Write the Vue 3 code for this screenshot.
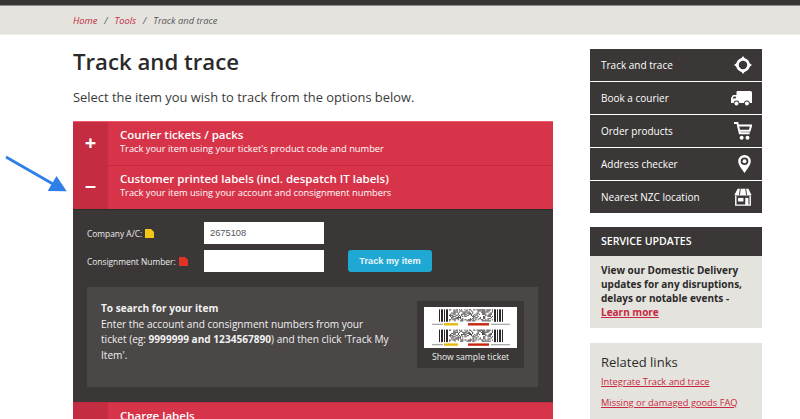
<template>
  <div class="page">
    <div class="topstrip"></div>
    <div class="breadcrumb">
      <a>Home</a><span class="sep">/</span><a>Tools</a><span class="sep">/</span><span>Track and trace</span>
    </div>

    <div class="content">
      <main class="main">
        <h1>Track and trace</h1>
        <p class="lead">Select the item you wish to track from the options below.</p>

        <section class="accordion">
          <div class="acc-head first">
            <div class="acc-sign">+</div>
            <div class="acc-text">
              <h3>Courier tickets / packs</h3>
              <p>Track your item using your ticket's product code and number</p>
            </div>
          </div>
          <div class="acc-head">
            <div class="acc-sign">−</div>
            <div class="acc-text">
              <h3>Customer printed labels (incl. despatch IT labels)</h3>
              <p>Track your item using your account and consignment numbers</p>
            </div>
          </div>

          <div class="panel">
            <form class="track-form" @submit.prevent>
              <label class="lbl">Company A/C:
                <svg class="doc" viewBox="0 0 9 9"><path d="M0 0h6l3 3v6H0z" fill="#f5c518" /></svg>
              </label>
              <input v-model="account" />
              <span></span>
              <label class="lbl">Consignment Number:
                <svg class="doc" viewBox="0 0 9 9"><path d="M0 0h6l3 3v6H0z" fill="#e03325" /></svg>
              </label>
              <input v-model="consignment" />
              <button type="submit">Track my item</button>
            </form>

            <div class="help">
              <div class="help-text">
                <strong>To search for your item</strong><br />
                Enter the account and consignment numbers from your<br />
                ticket (eg: <strong>9999999 and 1234567890</strong>) and then click 'Track My<br />
                Item'.
              </div>
              <div class="sample">
                <svg class="ticket" viewBox="0 0 93 41">
                  <rect width="93" height="41" fill="#fff" />
                  <g v-for="row in [2.3, 22.6]" :key="row">
                    <rect v-for="b in bars" :key="b.x + '-' + row" :x="b.x" :y="row" :width="b.w" height="12.5" fill="#2a2626" />
                    <rect v-for="c in cells" :key="c.x + '-' + c.y + '-' + row" :x="c.x" :y="row + c.y" width="1.1" height="1.1" fill="#4a4646" />
                    <rect x="8" :y="row + 14.4" width="11" height="1.3" fill="#aaa" />
                    <rect x="20" :y="row + 13.8" width="14" height="2.4" fill="#e6b90f" />
                    <rect x="44" :y="row + 13.8" width="21" height="2.4" fill="#c9260f" />
                    <rect x="67" :y="row + 14.4" width="19" height="1.3" fill="#aaa" />
                  </g>
                </svg>
                <div class="sample-cap">Show sample ticket</div>
              </div>
            </div>
          </div>

          <div class="acc-head">
            <div class="acc-sign">+</div>
            <div class="acc-text">
              <h3>Charge labels</h3>
            </div>
          </div>
        </section>
      </main>

      <aside class="side">
        <nav class="tools">
          <a class="tool">
            <span>Track and trace</span>
            <svg viewBox="0 0 20 20" class="ico">
              <circle cx="10" cy="10" r="6.2" fill="none" stroke="#fff" stroke-width="3" />
              <path d="M10 0l2.6 3.6H7.4zM10 20l-2.6-3.6h5.2zM0 10l3.6-2.6v5.2zM20 10l-3.6 2.6V7.4z" fill="#fff" />
            </svg>
          </a>
          <a class="tool">
            <span>Book a courier</span>
            <svg viewBox="0 0 21 15" class="ico truck">
              <path d="M6.5 0H19.5A1.5 1.5 0 0 1 21 1.5V12H0V7l2-3h3.5V1A1 1 0 0 1 6.5 0z" fill="#fff" />
              <path d="M1.6 7.6l1.2-2H4.8v2z" fill="#3a3736" />
              <circle cx="5.5" cy="12.2" r="2.8" fill="#3a3736" />
              <circle cx="15.9" cy="12.2" r="2.8" fill="#3a3736" />
              <circle cx="5.5" cy="12.4" r="2" fill="#fff" />
              <circle cx="15.9" cy="12.4" r="2" fill="#fff" />
            </svg>
          </a>
          <a class="tool">
            <span>Order products</span>
            <svg viewBox="0 0 20 20" class="ico">
              <path d="M0 1.2h3.8l2.6 11.4h11" fill="none" stroke="#fff" stroke-width="2.2" />
              <path d="M4.6 4H19l-1.6 5.8H6" fill="none" stroke="#fff" stroke-width="2.2" />
              <circle cx="8.5" cy="17.4" r="2.2" fill="#fff" />
              <circle cx="15" cy="17.4" r="2.2" fill="#fff" />
            </svg>
          </a>
          <a class="tool">
            <span>Address checker</span>
            <svg viewBox="0 0 14 20" class="ico pin">
              <path d="M7 0a7 7 0 0 1 7 7c0 4-4 9-7 13-3-4-7-9-7-13a7 7 0 0 1 7-7z" fill="#fff" />
              <circle cx="7" cy="7" r="4.2" fill="#3a3736" />
              <circle cx="7" cy="7" r="2.2" fill="#fff" />
            </svg>
          </a>
          <a class="tool">
            <span>Nearest NZC location</span>
            <svg viewBox="0 0 20 20" class="ico">
              <path d="M4 .8h12l3.2 6.4v1.2H.8V7.2z" fill="#fff" />
              <path d="M7 1L6 8M13 1l1 7" stroke="#3a3736" stroke-width="1" />
              <path d="M2 9v10h16V9" fill="none" stroke="#fff" stroke-width="1.6" />
              <rect x="4.5" y="11" width="6" height="4" fill="#fff" />
              <rect x="12.5" y="11" width="3.5" height="8" fill="#fff" />
            </svg>
          </a>
        </nav>

        <div class="updates">
          <h4>SERVICE UPDATES</h4>
          <p>View our Domestic Delivery updates for any disruptions, delays or notable events - <a>Learn more</a></p>
        </div>

        <div class="related">
          <h4>Related links</h4>
          <a>Integrate Track and trace</a>
          <a>Missing or damaged goods FAQ</a>
        </div>
      </aside>
    </div>

    <svg class="arrow" viewBox="0 0 70 45">
      <path d="M6 3L53 30" stroke="#2f7fe8" stroke-width="2.8" fill="none" />
      <path d="M66.7 37.3L47.7 37L56.5 22z" fill="#2f7fe8" />
    </svg>
  </div>
</template>

<script setup>
import { ref } from 'vue'

const account = ref('2675108')
const consignment = ref('')

const bars = [
  { x: 15, w: 1 }, { x: 17, w: 2 }, { x: 20, w: 1 }, { x: 22, w: 2 },
  { x: 70, w: 2 }, { x: 73, w: 1 }, { x: 75, w: 2 }, { x: 78, w: 1 }
]

// pseudo random 2d code block for the sample ticket
const cells = []
let seed = 17
for (let y = 0; y < 12; y += 1.1) {
  for (let x = 25; x < 69; x += 1.1) {
    seed = (seed * 1103515245 + 12345) % 2147483648
    if (seed / 2147483648 > 0.5) cells.push({ x, y })
  }
}
</script>

<style scoped>
.page {
  position: relative;
  width: 800px;
  height: 419px;
  overflow: hidden;
  background: #fff;
  font-family: "Open Sans", "Noto Sans", sans-serif;
  color: #2b2a29;
}
.topstrip {
  height: 5px;
  background: #383634;
  border-bottom: 1px solid #8d8b87;
}
.breadcrumb {
  height: 28px;
  background: #e4e3de;
  padding-left: 73px;
  display: flex;
  align-items: center;
  font-size: 9.3px;
  font-style: italic;
  color: #555;
  border-bottom: 1px solid #efeeea;
}
.breadcrumb a {
  color: #c8283f;
}
.sep {
  margin: 0 7px;
  color: #555;
}
.content {
  display: flex;
  padding: 14px 38px 0 73px;
  gap: 37px;
}
.main {
  width: 480px;
  flex: none;
}
h1 {
  margin: 0;
  font-size: 22.2px;
  line-height: 26px;
  font-weight: 600;
  color: #2a2a2a;
}
.lead {
  margin: 11px 0 0;
  font-size: 12.9px;
  line-height: 22px;
  color: #3a3a3a;
}
.accordion {
  margin-top: 13px;
}
.acc-head {
  display: flex;
  height: 44px;
  background: #d7344a;
  color: #fff;
  border-top: 1px solid #c22a40;
  box-sizing: border-box;
}
.acc-head.first {
  border-top: 1px solid #ef5a6c;
}
.acc-sign {
  width: 35px;
  flex: none;
  background: #c42c41;
  display: flex;
  align-items: center;
  justify-content: center;
  padding-bottom: 3px;
  box-sizing: border-box;
  font-size: 20px;
  font-weight: 700;
}
.acc-text {
  padding: 5px 0 0 12px;
}
.acc-text h3 {
  margin: 0;
  font-size: 11.5px;
  line-height: 16px;
  font-weight: 600;
}
.acc-text p {
  margin: 0;
  font-size: 9.3px;
  line-height: 12px;
}
.panel {
  height: 193px;
  box-sizing: border-box;
  background: #3a3736;
  padding: 12px 15px 0 14px;
  border-top: 1px solid #2c2a29;
}
.track-form {
  display: grid;
  grid-template-columns: 117px 120px 1fr;
  row-gap: 6px;
  align-items: center;
}
.lbl {
  font-size: 8.4px;
  color: #eee;
  display: flex;
  align-items: center;
  gap: 3px;
}
.doc {
  width: 9px;
  height: 9px;
}
input {
  width: 120px;
  height: 22px;
  box-sizing: border-box;
  border: 0;
  background: #fff;
  padding: 0 6px;
  outline: none;
  font-family: "Liberation Sans", sans-serif;
  font-size: 9.3px;
  color: #555;
  border-radius: 0;
}
button {
  width: 84px;
  height: 22px;
  margin-left: 24px;
  border: 0;
  border-radius: 3px;
  background: #1fa8d4;
  color: #e8f4f8;
  font-family: "Liberation Sans", sans-serif;
  font-size: 9.2px;
  font-weight: 700;
  padding: 0;
}
.help {
  margin-top: 15px;
  height: 100px;
  background: #4a4746;
  display: flex;
  justify-content: space-between;
  padding: 14px 14px 0;
  box-sizing: border-box;
  color: #f1f1f1;
}
.help-text {
  width: 292px;
  font-size: 10.1px;
  line-height: 15.7px;
  white-space: nowrap;
}
.sample {
  width: 107px;
  height: 67px;
  background: #3a3736;
  padding: 6px 7px 0;
  box-sizing: border-box;
}
.ticket {
  width: 93px;
  height: 41px;
  display: block;
}
.sample-cap {
  margin-top: 2px;
  font-size: 8.6px;
  line-height: 14px;
  text-align: center;
  color: #eee;
  white-space: nowrap;
}
.side {
  width: 172px;
  flex: none;
}
.tools {
  display: flex;
  flex-direction: column;
  gap: 1px;
}
.tool {
  height: 32px;
  background: #3a3736;
  color: #fff;
  font-size: 10px;
  display: flex;
  align-items: center;
  justify-content: space-between;
  padding: 0 10px 0 11px;
}
.ico {
  width: 18px;
  height: 18px;
}
.ico.truck {
  width: 21px;
  height: 15px;
}
.ico.pin {
  width: 13px;
  height: 18px;
  margin-right: 1px;
}
.updates {
  margin-top: 14px;
  background: #e4e3de;
}
.updates h4 {
  margin: 0;
  background: #3a3736;
  color: #fff;
  font-size: 10.6px;
  font-weight: 600;
  line-height: 29px;
  padding-left: 11px;
}
.updates p {
  margin: 0;
  padding: 7px 11px 9px;
  font-size: 10px;
  line-height: 14px;
  font-weight: 700;
  color: #2b2a29;
}
.updates a {
  color: #c8283f;
  text-decoration: underline;
}
.related {
  margin-top: 15px;
  height: 90px;
  background: #e4e3de;
  padding: 10px 11px;
  box-sizing: border-box;
}
.related h4 {
  margin: 0;
  font-size: 13px;
  font-weight: 400;
  line-height: 18px;
}
.related a {
  display: block;
  font-size: 9.3px;
  line-height: 21px;
  color: #c8283f;
  text-decoration: underline;
  white-space: nowrap;
}
.arrow {
  position: absolute;
  left: 0;
  top: 154px;
  width: 70px;
  height: 45px;
}
</style>
